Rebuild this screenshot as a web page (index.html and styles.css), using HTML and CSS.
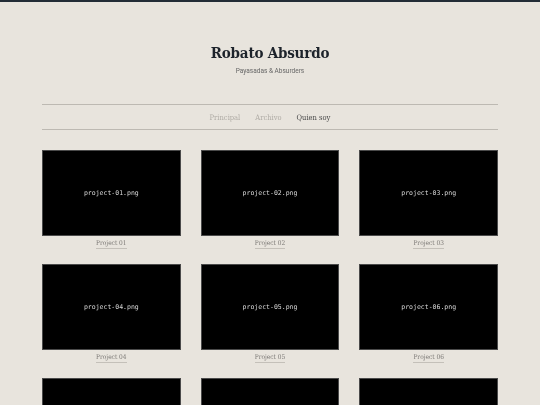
FILE: index.html
```html
<!DOCTYPE html>
<html lang="es">
<head>
<meta charset="utf-8">
<title>Robato Absurdo</title>
<link rel="stylesheet" href="styles.css">
</head>
<body>
<div class="topbar"></div>
<div class="wrap">
  <header class="masthead">
    <h1 class="site-title">Robato Absurdo</h1>
    <p class="tagline">Payasadas &amp; Absurders</p>
  </header>
  <nav class="nav">
    <a class="nav-link" href="#">Principal</a>
    <a class="nav-link" href="#">Archivo</a>
    <a class="nav-link active" href="#">Quien soy</a>
  </nav>
  <main class="grid">
    <figure class="card"><div class="thumb"><span class="fname">project-01.png</span></div><figcaption><a class="cap" href="#">Project 01</a></figcaption></figure>
    <figure class="card"><div class="thumb"><span class="fname">project-02.png</span></div><figcaption><a class="cap" href="#">Project 02</a></figcaption></figure>
    <figure class="card"><div class="thumb"><span class="fname">project-03.png</span></div><figcaption><a class="cap" href="#">Project 03</a></figcaption></figure>
    <figure class="card"><div class="thumb"><span class="fname">project-04.png</span></div><figcaption><a class="cap" href="#">Project 04</a></figcaption></figure>
    <figure class="card"><div class="thumb"><span class="fname">project-05.png</span></div><figcaption><a class="cap" href="#">Project 05</a></figcaption></figure>
    <figure class="card"><div class="thumb"><span class="fname">project-06.png</span></div><figcaption><a class="cap" href="#">Project 06</a></figcaption></figure>
    <figure class="card"><div class="thumb"><span class="fname">project-07.png</span></div><figcaption><a class="cap" href="#">Project 07</a></figcaption></figure>
    <figure class="card"><div class="thumb"><span class="fname">project-08.png</span></div><figcaption><a class="cap" href="#">Project 08</a></figcaption></figure>
    <figure class="card"><div class="thumb"><span class="fname">project-09.png</span></div><figcaption><a class="cap" href="#">Project 09</a></figcaption></figure>
  </main>
</div>
</body>
</html>
```

FILE: styles.css
```css
html, body {
  margin: 0;
  padding: 0;
}
body {
  background: #e8e4dd;
  font-family: "DejaVu Serif", serif;
  color: #222;
  -webkit-font-smoothing: antialiased;
}
.topbar {
  height: 2px;
  background: #232c36;
}
.wrap {
  width: 456px;
  margin: 0 auto;
  will-change: transform;
}
.masthead {
  text-align: center;
  padding-top: 41px;
  height: 61px;
}
.site-title {
  margin: 0;
  font-family: "DejaVu Serif Condensed", "DejaVu Serif", serif;
  font-weight: bold;
  font-size: 15px;
  letter-spacing: -0.2px;
  line-height: 20px;
  color: #1d232b;
}
.tagline {
  margin: 4px 0 0;
  font-family: "Roboto", "Liberation Sans", sans-serif;
  font-size: 6.5px;
  line-height: 8px;
  color: #666;
}
.nav {
  border-top: 1px solid #bdb9b2;
  border-bottom: 1px solid #bdb9b2;
  display: flex;
  justify-content: center;
  gap: 15px;
  height: 23px;
  padding-top: 1px;
  box-sizing: content-box;
  align-items: center;
  margin-bottom: 20px;
}
.nav-link {
  font-family: "DejaVu Serif Condensed", "DejaVu Serif", serif;
  font-size: 7.5px;
  color: #b0aca6;
  text-decoration: none;
}
.nav-link.active {
  color: #4a4a4a;
}
.grid {
  display: grid;
  grid-template-columns: repeat(3, 1fr);
  column-gap: 20px;
  row-gap: 14px;
}
.card {
  margin: 0;
}
.thumb {
  height: 84px;
  background: #000;
  border: 1px solid #4a4a4a;
  display: flex;
  align-items: center;
  justify-content: center;
}
.fname {
  font-family: "DejaVu Sans Mono", monospace;
  font-size: 6.5px;
  color: #d8d8d8;
}
figcaption {
  display: flex;
  justify-content: center;
  align-items: flex-start;
  height: 14px;
  padding-top: 3px;
  box-sizing: border-box;
  font-size: 6.5px;
  line-height: 10px;
}
.cap {
  font-family: "DejaVu Serif Condensed", "DejaVu Serif", serif;
  font-size: 6.5px;
  line-height: 9px;
  color: #7a7774;
  text-decoration: none;
  border-bottom: 1px solid #c4c0b9;
}
```
